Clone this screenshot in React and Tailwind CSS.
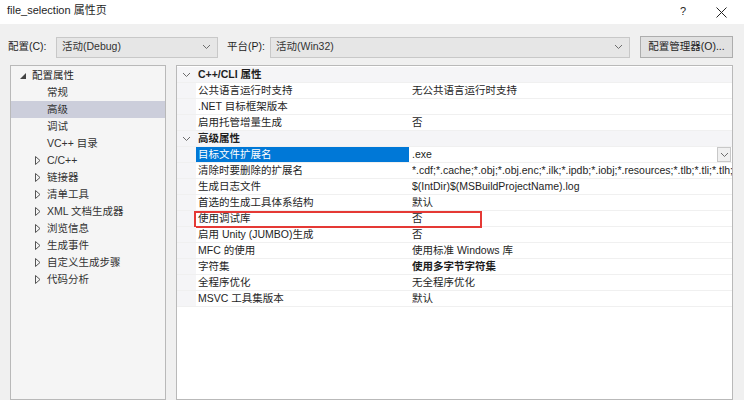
import React from "react";

const font = { fontFamily: '"Liberation Sans", "Noto Sans CJK SC", sans-serif' };

const Chevron = ({ className = "" }) => (
  <svg width="9" height="6" viewBox="0 0 9 6" className={className}>
    <polyline points="1,1 4.5,4.5 8,1" fill="none" stroke="#6d6d6d" strokeWidth="1" />
  </svg>
);

const Expanded = () => (
  <svg width="6" height="6" viewBox="0 0 6 6">
    <polygon points="6,0 6,6 0,6" fill="#444" />
  </svg>
);

const Collapsed = () => (
  <svg width="6" height="9" viewBox="0 0 6 9">
    <polygon points="0.5,0.5 5,4.5 0.5,8.5" fill="none" stroke="#555" strokeWidth="1" />
  </svg>
);

const tree = [
  { label: "配置属性", level: 0, open: true },
  { label: "常规", level: 1 },
  { label: "高级", level: 1, selected: true },
  { label: "调试", level: 1 },
  { label: "VC++ 目录", level: 1 },
  { label: "C/C++", level: 1, closed: true },
  { label: "链接器", level: 1, closed: true },
  { label: "清单工具", level: 1, closed: true },
  { label: "XML 文档生成器", level: 1, closed: true },
  { label: "浏览信息", level: 1, closed: true },
  { label: "生成事件", level: 1, closed: true },
  { label: "自定义生成步骤", level: 1, closed: true },
  { label: "代码分析", level: 1, closed: true },
];

const rows = [
  { header: "C++/CLI 属性" },
  { name: "公共语言运行时支持", value: "无公共语言运行时支持" },
  { name: ".NET 目标框架版本", value: "" },
  { name: "启用托管增量生成", value: "否" },
  { header: "高级属性" },
  { name: "目标文件扩展名", value: ".exe", selected: true },
  { name: "清除时要删除的扩展名", value: "*.cdf;*.cache;*.obj;*.obj.enc;*.ilk;*.ipdb;*.iobj;*.resources;*.tlb;*.tli;*.tlh;*.tmp;*.rsp" },
  { name: "生成日志文件", value: "$(IntDir)$(MSBuildProjectName).log" },
  { name: "首选的生成工具体系结构", value: "默认" },
  { name: "使用调试库", value: "否", marked: true },
  { name: "启用 Unity (JUMBO)生成", value: "否" },
  { name: "MFC 的使用", value: "使用标准 Windows 库" },
  { name: "字符集", value: "使用多字节字符集", bold: true },
  { name: "全程序优化", value: "无全程序优化" },
  { name: "MSVC 工具集版本", value: "默认" },
];

export default function App() {
  return (
    <div className="w-[744px] h-[400px] bg-[#f0f0f0] overflow-hidden flex flex-col text-[10.5px] text-[#1e1e1e]" style={font}>
      {/* title bar */}
      <div className="h-[24px] bg-white flex items-center pl-[7px] shrink-0">
        <span className="flex-1 text-[11px] -mt-[3px]">file_selection 属性页</span>
        <span className="w-[10px] text-[11px] mr-[26px] -mt-[2px]">?</span>
        <svg width="11" height="11" viewBox="0 0 11 11" className="mr-[17px]">
          <path d="M0.5 0.5 L10.5 10.5 M10.5 0.5 L0.5 10.5" stroke="#222" strokeWidth="1" />
        </svg>
      </div>

      {/* config row */}
      <div className="flex items-center mt-[12px] h-[22px] shrink-0 whitespace-nowrap">
        <span className="ml-[8px] w-[48px]">配置(C):</span>
        <div className="w-[162px] h-[21px] bg-[#e6e6e6] border border-[#c8c8c8] flex items-center pl-[5px] pr-[6px]">
          <span className="flex-1 text-[#333]">活动(Debug)</span>
          <Chevron />
        </div>
        <span className="ml-[9px] w-[43px]">平台(P):</span>
        <div className="w-[360px] h-[21px] bg-[#e6e6e6] border border-[#c8c8c8] flex items-center pl-[5px] pr-[6px]">
          <span className="flex-1 text-[#333]">活动(Win32)</span>
          <Chevron />
        </div>
        <div className="ml-[10px] w-[93px] h-[22px] bg-[#e1e1e1] border border-[#adadad] flex items-center justify-center">
          配置管理器(O)...
        </div>
      </div>

      {/* panels */}
      <div className="flex mt-[7px] flex-1 min-h-0">
        <div className="ml-[10px] w-[156px] bg-[#f5f5f5] border border-[#b9b9b9] pt-[1px]">
          {tree.map((t) => (
            <div
              key={t.label}
              className={`h-[17px] flex items-center whitespace-nowrap ${t.selected ? "bg-[#cccedb]" : ""}`}
            >
              {t.level === 0 ? (
                <>
                  <span className="ml-[9px] w-[12px] flex items-center"><Expanded /></span>
                  <span>{t.label}</span>
                </>
              ) : (
                <>
                  <span className="ml-[24px] w-[12px] flex items-center">{t.closed && <Collapsed />}</span>
                  <span className="text-[#333]">{t.label}</span>
                </>
              )}
            </div>
          ))}
        </div>

        <div className="ml-[10px] w-[557px] bg-white border border-[#b9b9b9] pt-[1px] overflow-hidden">
          {rows.map((r, i) =>
            r.header ? (
              <div key={i} className="h-[16px] flex items-center bg-[#f5f5f7] border-b border-[#f0f0f0]">
                <span className="w-[19px] flex justify-center"><Chevron /></span>
                <span className="font-bold ml-[2px]">{r.header}</span>
              </div>
            ) : (
              <div key={i} className="relative h-[16px] flex border-b border-[#f0f0f0]">
                <span className="w-[19px] bg-[#f5f5f7]" />
                <span
                  className={`w-[213px] pl-[2px] flex items-center whitespace-nowrap ${r.selected ? "bg-[#0078d7] text-white" : ""}`}
                >
                  {r.name}
                </span>
                <span className={`flex-1 min-w-0 pl-[3px] flex items-center whitespace-nowrap overflow-hidden ${r.bold ? "font-bold" : ""}`}>
                  <span className="flex-1 min-w-0 overflow-hidden">{r.value}</span>
                  {r.selected && (
                    <span className="w-[14px] h-[15px] mr-[1px] bg-[#f0f0f0] border border-[#c8c8c8] flex items-center justify-center">
                      <Chevron />
                    </span>
                  )}
                </span>
                {r.marked && (
                  <div className="absolute left-[17px] top-0 w-[288px] h-[17px] border-2 border-[#e53935]" />
                )}
              </div>
            )
          )}
        </div>
      </div>
    </div>
  );
}
